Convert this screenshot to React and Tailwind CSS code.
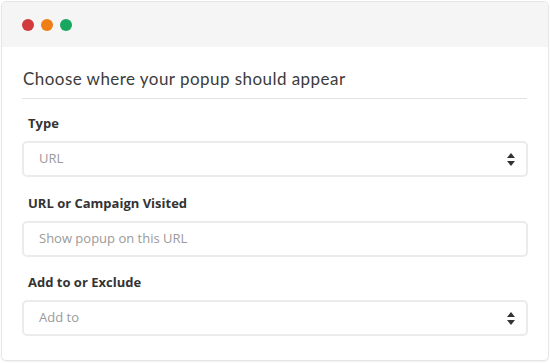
import React from "react";

function Arrows() {
  return (
    <svg width="8" height="13" viewBox="0 0 8 13" className="shrink-0">
      <path d="M4 0 L8 5 L0 5 Z" fill="#333" />
      <path d="M4 13 L8 8 L0 8 Z" fill="#333" />
    </svg>
  );
}

function Field({ label, value, select }) {
  return (
    <div className="flex flex-col">
      <div className="pl-[6px] text-[13px] leading-[18px] font-bold text-[#333]" style={{ fontFamily: '"Open Sans", sans-serif' }}>
        {label}
      </div>
      <div className="mt-[9px] h-[36px] rounded-[5px] border-2 border-[#ebebeb] bg-white flex items-center pl-[15px] pr-[11px] justify-between">
        <span className="text-[13px] text-[#9a9a9a]" style={{ fontFamily: '"Open Sans", sans-serif' }}>{value}</span>
        {select && <Arrows />}
      </div>
    </div>
  );
}

export default function App() {
  return (
    <div className="w-[550px] h-[363px] bg-white p-[1px]">
      <div className="w-[548px] h-[360px] rounded-[5px] border border-[#e6e6e6] shadow-[0_1px_2px_rgba(0,0,0,0.06)] overflow-hidden bg-white flex flex-col">
        <div className="h-[45px] bg-[#f5f5f5] flex items-center pl-[20px] gap-[7px] shrink-0">
          <span className="w-[12px] h-[12px] rounded-full bg-[#d13b3b]" />
          <span className="w-[12px] h-[12px] rounded-full bg-[#ef7e16]" />
          <span className="w-[12px] h-[12px] rounded-full bg-[#17a760]" />
        </div>
        <div className="px-[20px] pt-[21px] flex flex-col">
          <div className="pl-[1px] text-[17px] leading-[22px] tracking-[0.45px] text-[#3c3c3c] pb-[8px] border-b border-[#e2e2e2] mr-[1px]" style={{ fontFamily: 'Lato, sans-serif' }}>
            Choose where your popup should appear
          </div>
          <div className="pt-[15px] flex flex-col gap-[16.5px]">
            <Field label="Type" value="URL" select />
            <Field label="URL or Campaign Visited" value="Show popup on this URL" />
            <Field label="Add to or Exclude" value="Add to" select />
          </div>
        </div>
      </div>
    </div>
  );
}
